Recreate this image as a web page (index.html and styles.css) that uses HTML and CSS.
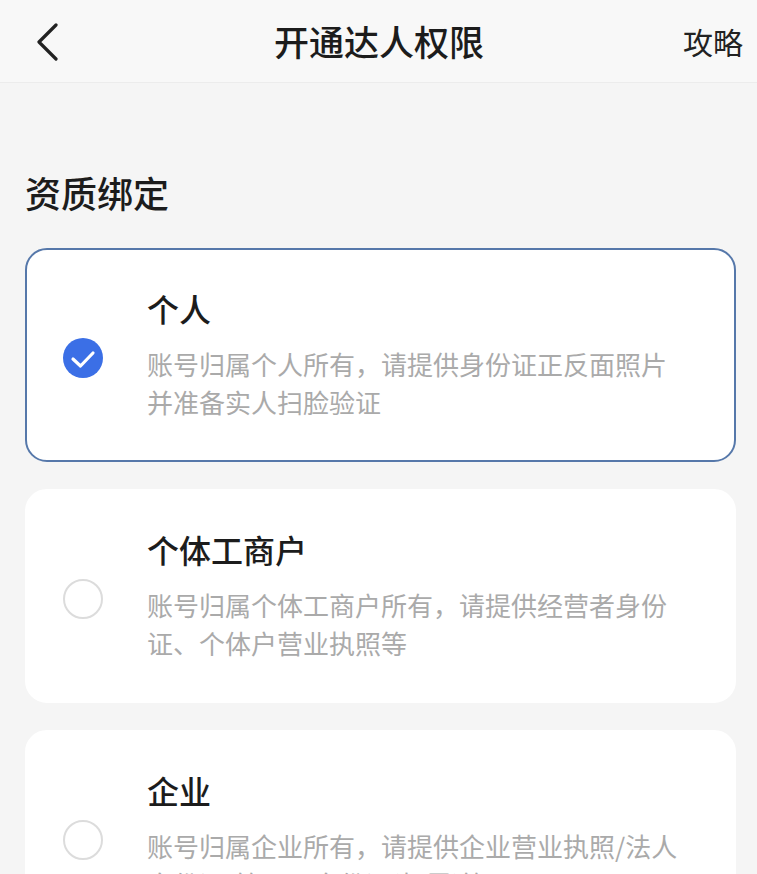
FILE: index.html
```html
<!DOCTYPE html>
<html lang="zh-CN">
<head>
<meta charset="utf-8">
<title>开通达人权限</title>
<link rel="stylesheet" href="styles.css">
</head>
<body>
<header class="navbar">
  <span class="back">
    <svg width="24" height="40" viewBox="0 0 24 40"><path d="M19 3 L2 20 L19 37" fill="none" stroke="#222" stroke-width="3.2" stroke-linecap="round" stroke-linejoin="round"/></svg>
  </span>
  <h1 class="nav-title">开通达人权限</h1>
  <span class="nav-link">攻略</span>
</header>
<main class="content">
  <h2 class="section-title">资质绑定</h2>
  <div class="options">
    <div class="card card-selected">
      <span class="radio radio-checked">
        <svg width="40" height="40" viewBox="0 0 40 40"><circle cx="20" cy="20" r="20" fill="#3b6fe6"/><path d="M10 21 L17.5 28 L30 15" fill="none" stroke="#fff" stroke-width="3.2" stroke-linecap="round" stroke-linejoin="round"/></svg>
      </span>
      <div class="card-text">
        <div class="card-title">个人</div>
        <div class="card-desc">账号归属个人所有，请提供身份证正反面照片并准备实人扫脸验证</div>
      </div>
    </div>
    <div class="card">
      <span class="radio"></span>
      <div class="card-text">
        <div class="card-title">个体工商户</div>
        <div class="card-desc">账号归属个体工商户所有，请提供经营者身份证、个体户营业执照等</div>
      </div>
    </div>
    <div class="card">
      <span class="radio"></span>
      <div class="card-text">
        <div class="card-title">企业</div>
        <div class="card-desc">账号归属企业所有，请提供企业营业执照/法人身份证/管理员身份证(如需)等</div>
      </div>
    </div>
  </div>
</main>
</body>
</html>
```
FILE: styles.css
```css
* { box-sizing: border-box; }
html, body {
  margin: 0;
  padding: 0;
  background: #f5f5f5;
  font-family: "Noto Sans CJK SC", "Noto Sans", sans-serif;
  color: #1a1a1a;
  overflow: hidden;
}
.navbar {
  height: 83px;
  background: #f8f8f8;
  border-bottom: 1px solid #ececec;
  display: grid;
  grid-template-columns: 1fr auto 1fr;
  align-items: center;
  padding: 0 14px 0 37px;
}
.back {
  display: flex;
  align-items: center;
  padding-top: 1px;
  justify-self: start;
}
.nav-title {
  margin: 0;
  font-size: 35px;
  font-weight: 500;
  line-height: 44px;
  color: #1c1c1c;
  margin-left: -22px;
}
.nav-link {
  justify-self: end;
  font-size: 30px;
  line-height: 40px;
  color: #222;
}
.content {
  padding: 0 21px 0 25px;
}
.section-title {
  margin: 84px 0 0;
  font-size: 36px;
  line-height: 50px;
  font-weight: 500;
  color: #1c1c1c;
}
.options {
  margin-top: 31px;
  display: flex;
  flex-direction: column;
  gap: 27px;
}
.card {
  background: #fff;
  border: 2px solid #fff;
  border-radius: 22px;
  height: 214px;
  display: flex;
  align-items: center;
  padding: 0 49px 0 36px;
  gap: 44px;
}
.card-selected {
  border-color: #5678aa;
}
.radio {
  flex: none;
  width: 40px;
  height: 40px;
  border-radius: 50%;
  border: 2px solid #dcdcdc;
  margin-top: 6px;
}
.radio-checked {
  border: none;
  display: block;
}
.radio-checked svg { display: block; }
.card-text {
  flex: 1;
  align-self: flex-start;
  padding-top: 38px;
}
.card-title {
  font-size: 32px;
  line-height: 40px;
  font-weight: 500;
  color: #1c1c1c;
}
.card-desc {
  margin-top: 17px;
  font-size: 26px;
  line-height: 38px;
  color: #aaaaaa;
}
```
